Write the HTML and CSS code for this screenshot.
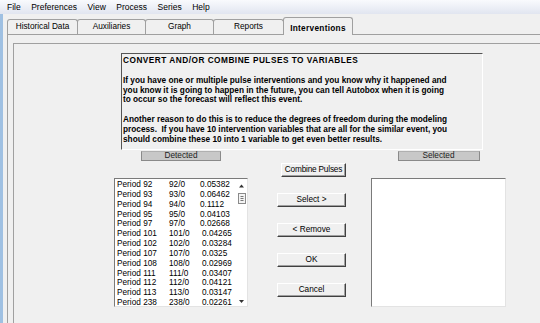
FILE: index.html
```html
<!DOCTYPE html>
<html lang="en">
<head>
    <meta charset="UTF-8">
    <title>Interventions</title>
    <link rel="stylesheet" href="styles.css">
</head>
<body>
    <div class="menubar">
        <span>File</span>
        <span>Preferences</span>
        <span>View</span>
        <span>Process</span>
        <span>Series</span>
        <span>Help</span>
    </div>

    <div class="window">
        <div class="tabs">
            <div class="tab tab-hist">Historical Data</div>
            <div class="tab tab-aux">Auxiliaries</div>
            <div class="tab tab-graph">Graph</div>
            <div class="tab tab-rep">Reports</div>
            <div class="tab tab-int active">Interventions</div>
        </div>

        <div class="page">
            <div class="frame">
                <div class="desc">
                    <p class="desc-title">CONVERT AND/OR COMBINE PULSES TO VARIABLES</p>
                    <p>If you have one or multiple pulse interventions and you know why it happened and<br>
                    you know it is going to happen in the future, you can tell Autobox when it is going<br>
                    to occur so the forecast will reflect this event.</p>
                    <p>Another reason to do this is to reduce the degrees of freedom during the modeling<br>
                    process. &nbsp;If you have 10 intervention variables that are all for the similar event, you<br>
                    should combine these 10 into 1 variable to get even better results.</p>
                </div>

                <div class="lower">
                    <div class="col col-left">
                        <div class="label">Detected</div>
                        <div class="list">
                            <div class="rows">
                                <div class="row"><span class="c1">Period 92</span><span class="c2">92/0</span><span>0.05382</span></div>
                                <div class="row"><span class="c1">Period 93</span><span class="c2">93/0</span><span>0.06462</span></div>
                                <div class="row"><span class="c1">Period 94</span><span class="c2">94/0</span><span>0.1112</span></div>
                                <div class="row"><span class="c1">Period 95</span><span class="c2">95/0</span><span>0.04103</span></div>
                                <div class="row"><span class="c1">Period 97</span><span class="c2">97/0</span><span>0.02668</span></div>
                                <div class="row"><span class="c1">Period 101</span><span class="c2">101/0</span><span class="c3">0.04265</span></div>
                                <div class="row"><span class="c1">Period 102</span><span class="c2">102/0</span><span class="c3">0.03284</span></div>
                                <div class="row"><span class="c1">Period 107</span><span class="c2">107/0</span><span class="c3">0.0325</span></div>
                                <div class="row"><span class="c1">Period 108</span><span class="c2">108/0</span><span class="c3">0.02969</span></div>
                                <div class="row"><span class="c1">Period 111</span><span class="c2">111/0</span><span class="c3">0.03407</span></div>
                                <div class="row"><span class="c1">Period 112</span><span class="c2">112/0</span><span class="c3">0.04121</span></div>
                                <div class="row"><span class="c1">Period 113</span><span class="c2">113/0</span><span class="c3">0.03147</span></div>
                                <div class="row"><span class="c1">Period 238</span><span class="c2">238/0</span><span class="c3">0.02261</span></div>
                            </div>
                            <svg class="scroll" width="11" height="127" viewBox="0 0 11 127">
                                <polygon points="3,8.5 5.5,5.5 8,8.5" fill="#333"/>
                                <rect x="2.5" y="14.5" width="7" height="10" fill="#f4f4f4" stroke="#8a8a8a"/>
                                <path d="M4.5 17.5H7.5M4.5 19.5H7.5M4.5 21.5H7.5" stroke="#777"/>
                                <polygon points="3,121 8,121 5.5,124" fill="#333"/>
                            </svg>
                        </div>
                    </div>

                    <div class="col col-mid">
                        <button class="btn btn-combine">Combine Pulses</button>
                        <button class="btn">Select &gt;</button>
                        <button class="btn">&lt; Remove</button>
                        <button class="btn">OK</button>
                        <button class="btn">Cancel</button>
                    </div>

                    <div class="col col-right">
                        <div class="label label-sel">Selected</div>
                        <div class="list list-sel"></div>
                    </div>
                </div>
            </div>
        </div>
    </div>
</body>
</html>
```

FILE: styles.css
```css
/* General */
body {
    margin: 0;
    height: 323px;
    overflow: hidden;
    background: #f0f0f0;
    font-family: "Liberation Sans", Arial, sans-serif;
    font-size: 8.25px;
    color: #000;
}

/* Menu bar */
.menubar {
    height: 14px;
    display: flex;
    align-items: center;
    gap: 10.5px;
    padding-left: 7px;
    background: linear-gradient(#f9fafd, #e1e5f0);
    font-size: 8.5px;
}

/* Window with tabs */
.window {
    border-left: 3px solid #9fc0e2;
    height: 309px;
}

.tabs {
    display: flex;
    align-items: flex-end;
    height: 20px;
    margin-left: 4px;
    border-bottom: 1px solid #a0a0a0;
}

.tab {
    height: 15px;
    box-sizing: border-box;
    border: 1px solid #a0a0a0;
    border-bottom: none;
    border-radius: 3px 3px 0 0;
    margin-left: -1px;
    text-align: center;
    line-height: 14px;
    white-space: nowrap;
}

.tab-hist { width: 71px; margin-left: 0; }
.tab-aux { width: 69px; }
.tab-graph { width: 69px; }
.tab-rep { width: 71px; }

.tab.active {
    width: 70px;
    height: 18px;
    margin-bottom: -1px;
    padding-top: 5px;
    line-height: 12px;
    font-weight: bold;
    letter-spacing: 0.3px;
    background: #f0f0f0;
    position: relative;
}

.page {
    margin-left: 4px;
    height: 288px;
    box-sizing: border-box;
    padding: 8px 0 0 5px;
    border-left: 1px solid #a0a0a0;
}

.frame {
    height: 100%;
    border-top: 1px solid #a0a0a0;
    border-left: 1px solid #a0a0a0;
}

/* Description box */
.desc {
    margin: 9px 0 0 107px;
    width: 362px;
    height: 97px;
    box-sizing: border-box;
    padding: 2px 0 0 1px;
    border: 1px solid;
    border-color: #555 #fff #fff #555;
    font-weight: bold;
    line-height: 9.85px;
    white-space: nowrap;
}

.desc p {
    margin: 0 0 9.85px;
}

.desc .desc-title {
    letter-spacing: 0.5px;
}

/* Lists and buttons */
.lower {
    display: flex;
    margin: 1px 0 0 100px;
}

.col {
    display: flex;
    flex-direction: column;
    align-items: center;
}

.col-left { width: 134px; }
.col-right { width: 135px; margin-left: 25px; }

.label {
    width: 80px;
    height: 10px;
    box-sizing: border-box;
    background: #c8c8c8;
    border: 1px solid #8a8a8a;
    border-top-color: #b0b0b0;
    line-height: 8px;
    text-align: center;
    color: #222;
}

.label-sel { width: 82px; }

.list {
    margin-top: 17px;
    width: 100%;
    height: 129px;
    box-sizing: border-box;
    border: 1px solid;
    border-color: #7a7a7a #e3e3e3 #e3e3e3 #7a7a7a;
    background: #fff;
    display: flex;
}

.rows {
    flex: 1;
    padding: 1px 0 0 2px;
    line-height: 9.85px;
}

.row {
    display: flex;
    white-space: nowrap;
}

.row .c1 { width: 52px; }
.row .c2 { width: 31px; }
.row .c3 { padding-left: 2px; }

.scroll {
    display: block;
    flex: none;
}

.col-mid {
    width: 69px;
    margin-left: 29px;
    padding-top: 12px;
    gap: 16px;
}

.btn {
    width: 69px;
    height: 14px;
    box-sizing: border-box;
    padding: 0;
    background: #f0f0f0;
    border: 1px solid;
    border-color: #fff #404040 #404040 #fff;
    box-shadow: inset -1px -1px #a0a0a0;
    font-family: "Liberation Sans", Arial, sans-serif;
    font-size: 8.25px;
    line-height: 12px;
    color: #000;
    text-align: center;
}

.btn-combine {
    width: 65px;
    margin-left: 4px;
    letter-spacing: -0.2px;
}
```
